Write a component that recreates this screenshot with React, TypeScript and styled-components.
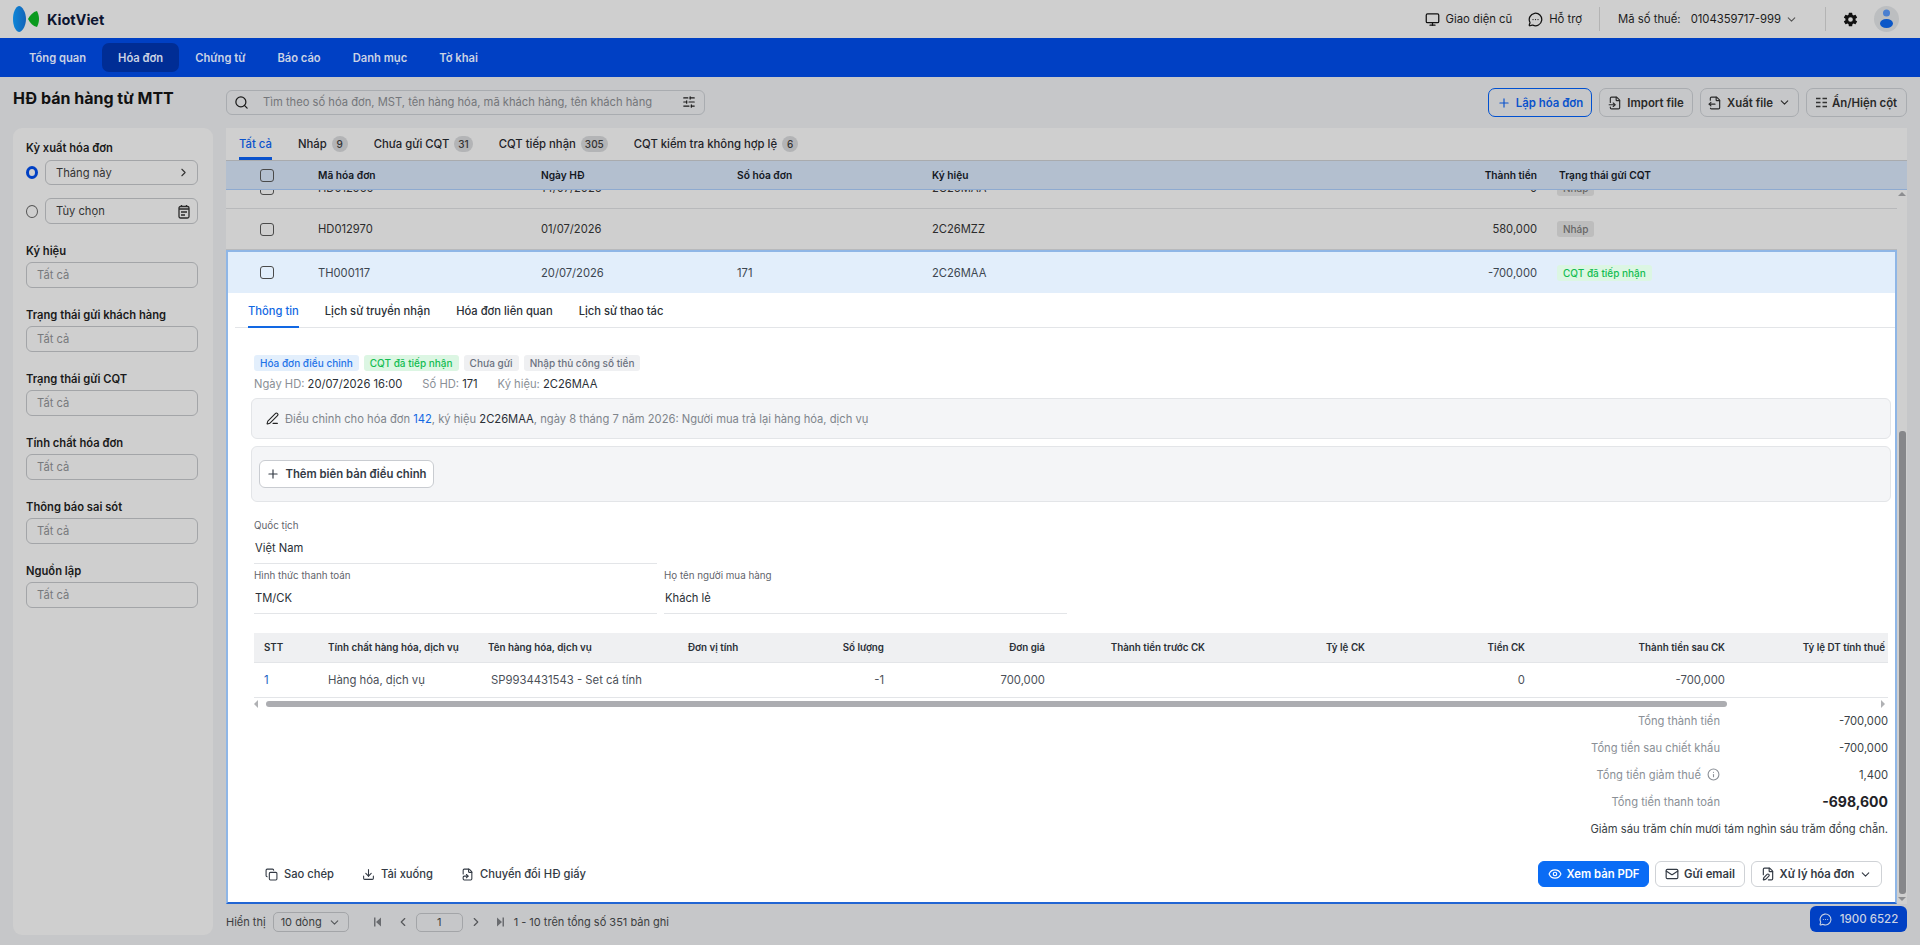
import React from "react";
import styled, { createGlobalStyle } from "styled-components";
import {
  ChevronDown,
  ChevronLeft,
  ChevronRight,
  Copy,
  Download,
  Eye,
  FileInput,
  FileOutput,
  FilePen,
  FileSymlink,
  Info,
  Mail,
  MessageCircleMore,
  Monitor,
  PenLine,
  Plus,
  Search,
  SlidersHorizontal,
} from "lucide-react";
import { IoSettingsSharp } from "react-icons/io5";

const GlobalStyle = createGlobalStyle`
  html, body {
    margin: 0;
    padding: 0;
    height: 945px;
    overflow: hidden;
    background: #c6c7c9;
    font-family: Inter, "Noto Sans", sans-serif;
    color: #111;
  }
  * { box-sizing: border-box; }
`;

const Page = styled.div`
  position: relative;
  width: 1920px;
  height: 945px;
  overflow: hidden;
`;

const TopBar = styled.header`
  height: 38px;
  background: #cfcfcf;
  display: flex;
  align-items: center;
  padding: 0 21px 0 13px;
`;

const Brand = styled.div`
  display: flex;
  align-items: center;
  gap: 8px;
  font-size: 14.5px;
  font-weight: 700;
  color: #0d1430;
`;

const TopRight = styled.div`
  margin-left: auto;
  display: flex;
  align-items: center;
  font-size: 11.3px;
  color: #1c1c1c;
`;

const TopLink = styled.div<{ $ml?: number; $gap?: number }>`
  display: flex;
  align-items: center;
  gap: ${(p) => p.$gap ?? 6}px;
  margin-left: ${(p) => p.$ml ?? 0}px;
`;

const TaxCode = styled.span`
  margin-left: 6px;
`;

const TopSep = styled.span<{ $ml: number }>`
  width: 1px;
  height: 24px;
  background: #b4b4b4;
  margin-left: ${(p) => p.$ml}px;
`;

const Avatar = styled.div`
  width: 25px;
  height: 26px;
  margin-left: 16px;
  border-radius: 50%;
  background: #bcbec0;
  display: flex;
  align-items: center;
  justify-content: center;
`;

const Nav = styled.nav`
  height: 39px;
  background: #0040c4;
  display: flex;
  align-items: center;
  padding-left: 13px;
`;

const NavItem = styled.a<{ $active?: boolean }>`
  height: 29px;
  padding: 0 16px;
  display: flex;
  align-items: center;
  border-radius: 7px;
  font-size: 11.2px;
  font-weight: 600;
  color: #cbd3e4;
  background: ${(p) => (p.$active ? "#002d95" : "transparent")};
`;

const Toolbar = styled.div`
  height: 51px;
  display: flex;
  align-items: center;
  padding: 0 13px;
`;

const Title = styled.h1`
  width: 213px;
  margin: -10px 0 0;
  font-size: 16px;
  font-weight: 700;
  color: #111;
`;

const SearchBox = styled.div`
  width: 479px;
  height: 25px;
  margin-top: -1px;
  padding: 0 8px 0 7px;
  display: flex;
  align-items: center;
  border: 1px solid #a9acb0;
  border-radius: 6px;
  font-size: 11.2px;
  color: #74767a;
  span {
    margin-left: 14px;
    flex: 1;
  }
  svg {
    color: #1a1a1a;
  }
`;

const ToolActions = styled.div`
  margin-left: auto;
  display: flex;
  align-items: center;
  gap: 7px;
`;

const ToolButton = styled.button<{ $w: number; $primary?: boolean }>`
  width: ${(p) => p.$w}px;
  height: 29px;
  padding: 0;
  display: flex;
  align-items: center;
  justify-content: center;
  gap: 5px;
  background: transparent;
  border: 1px solid ${(p) => (p.$primary ? "#0050d0" : "#a9acb0")};
  border-radius: 7px;
  font: 600 11.4px Inter, sans-serif;
  color: ${(p) => (p.$primary ? "#0a52cc" : "#2a2a2a")};
`;

const Workspace = styled.div`
  display: grid;
  grid-template-columns: 200px 1681px;
  gap: 13px;
  padding-left: 13px;
`;

const Sidebar = styled.aside`
  height: 807px;
  padding: 12px 15px 0 13px;
  background: #cfcfcf;
  border-radius: 9px;
`;

const FilterGroup = styled.div`
  display: flex;
  flex-direction: column;
  gap: 3px;
  margin-bottom: 19px;
`;

const FilterLabel = styled.label`
  font-size: 11.2px;
  line-height: 16px;
  font-weight: 600;
  color: #1a1a1a;
`;

const RadioRow = styled.div<{ $mt?: number; $mb: number }>`
  display: flex;
  align-items: center;
  gap: 7px;
  margin-top: ${(p) => p.$mt ?? 0}px;
  margin-bottom: ${(p) => p.$mb}px;
`;

const Radio = styled.span<{ $on?: boolean }>`
  width: 12px;
  height: 13px;
  border-radius: 50%;
  border: ${(p) => (p.$on ? "3.5px solid #0040c4" : "1px solid #555")};
  background: #cfcfcf;
`;

const FilterField = styled.div<{ $h?: number }>`
  flex-grow: 1;
  flex-shrink: 0;
  height: ${(p) => p.$h ?? 26}px;
  padding: 0 7px 0 10px;
  display: flex;
  align-items: center;
  justify-content: space-between;
  border: 1px solid #a3a5a8;
  border-radius: 6px;
  font-size: 11.2px;
  color: ${(p) => (p.$h ? "#333" : "#77797c")};
  svg {
    color: #333;
  }
`;

const FilterValue = styled.span`
  color: #333;
`;

const Main = styled.main`
  display: flex;
  flex-direction: column;
`;

const TableCard = styled.section`
  height: 776px;
  display: flex;
  flex-direction: column;
  background: #cfcfcf;
`;

const TabBar = styled.div`
  height: 33px;
  padding-left: 13px;
  display: flex;
  align-items: flex-start;
  gap: 26px;
  border-bottom: 1px solid #a9abae;
`;

const Tab = styled.div<{ $active?: boolean }>`
  height: 32px;
  display: flex;
  align-items: center;
  gap: 5px;
  font-size: 11.3px;
  font-weight: 500;
  color: ${(p) => (p.$active ? "#0a52cc" : "#1f2328")};
  border-bottom: 3px solid ${(p) => (p.$active ? "#0a52cc" : "transparent")};
  padding-top: 3px;
`;

const Count = styled.span`
  min-width: 16px;
  height: 16px;
  padding: 0 4px;
  border-radius: 8px;
  background: #b3b4b6;
  font-size: 10px;
  line-height: 16px;
  text-align: center;
  color: #333;
`;

const Row = styled.div<{ $inset?: boolean }>`
  display: grid;
  grid-template-columns: ${(p) => (p.$inset ? 90 : 92)}px 223px 196px 195px 305px 300px 1fr;
  align-items: center;
`;

const HeaderRow = styled(Row)`
  height: 29px;
  background: #b3bfcf;
  border-bottom: 1px solid #8eaad0;
  font-size: 10.2px;
  font-weight: 600;
  color: #14181f;
`;

const HeaderStatus = styled.span`
  padding-left: 22px;
`;

const Amount = styled.span`
  text-align: right;
`;

const CheckCell = styled.div<{ $pl: number }>`
  padding-left: ${(p) => p.$pl}px;
  display: flex;
`;

const Check = styled.span`
  width: 14px;
  height: 13px;
  border: 1px solid #4a4a4a;
  border-radius: 3px;
`;

const Scroller = styled.div`
  flex: 1;
  display: flex;
  min-height: 0;
`;

const Rows = styled.div`
  width: 1671px;
  display: flex;
  flex-direction: column;
`;

const ClippedRow = styled.div`
  height: 19px;
  overflow: hidden;
  display: flex;
  flex-direction: column;
  justify-content: flex-end;
`;

const BodyRow = styled(Row)`
  height: 41px;
  flex-shrink: 0;
  border-bottom: 1px solid #b8b9bb;
  font-size: 11.2px;
  color: #2c2c2c;
`;

const Tag = styled.span<{ $tone: "draft" | "ok" | "blue" | "plain" }>`
  justify-self: start;
  height: 16px;
  padding: 0 6px;
  border-radius: 3px;
  font-size: 10px;
  line-height: 16px;
  font-weight: 500;
  white-space: nowrap;
  background: ${(p) =>
    ({ draft: "#bdbdbd", ok: "#dcf6e3", blue: "#e3effc", plain: "#eff0f2" })[p.$tone]};
  color: ${(p) =>
    ({ draft: "#666", ok: "#13bd52", blue: "#1f74e8", plain: "#6b7280" })[p.$tone]};
`;

const StatusTag = styled(Tag)`
  margin-left: 20px;
`;

const Panel = styled.div`
  flex: 1;
  min-height: 0;
  display: flex;
  flex-direction: column;
  background: #fff;
  border: 2px solid #8fb6e6;
  border-bottom-color: #2165d3;
`;

const SelectedRow = styled(Row)`
  height: 41px;
  flex-shrink: 0;
  background: #e2eefb;
  font-size: 11.2px;
  color: #3c4650;
`;

const SubTabs = styled.div`
  height: 35px;
  margin-left: 7px;
  padding-left: 13px;
  display: flex;
  gap: 26px;
  border-bottom: 1px solid #e3e5e8;
`;

const SubTab = styled.div<{ $active?: boolean }>`
  height: 35px;
  display: flex;
  align-items: center;
  padding-top: 2px;
  font-size: 11.2px;
  font-weight: 500;
  color: ${(p) => (p.$active ? "#1268e3" : "#2a2f36")};
  border-bottom: 2px solid ${(p) => (p.$active ? "#1268e3" : "transparent")};
`;

const PanelBody = styled.div`
  flex: 1;
  min-height: 0;
  padding: 27px 4px 15px 23px;
  display: flex;
  flex-direction: column;
`;

const Tags = styled.div`
  display: flex;
  gap: 5px;
  padding-left: 3px;
`;

const Meta = styled.div`
  margin-top: 5px;
  padding-left: 3px;
  display: flex;
  gap: 20px;
  font-size: 11.2px;
  line-height: 16px;
  color: #8a8f96;
  b {
    font-weight: 400;
    color: #2a2f36;
  }
`;

const NoteBox = styled.div<{ $h: number; $mt: number }>`
  height: ${(p) => p.$h}px;
  margin-top: ${(p) => p.$mt}px;
  display: flex;
  align-items: center;
  padding: 0 7px;
  background: #f4f5f7;
  border: 1px solid #e3e5e8;
  border-radius: 6px;
`;

const NoteText = styled.div`
  margin-left: 7px;
  display: flex;
  align-items: center;
  gap: 6px;
  font-size: 11.2px;
  color: #80858c;
  svg {
    color: #222;
  }
  a {
    color: #1268e3;
  }
  b {
    font-weight: 400;
    color: #2a2f36;
  }
`;

const AddButton = styled.button`
  width: 175px;
  height: 28px;
  padding: 0;
  display: flex;
  align-items: center;
  justify-content: center;
  gap: 5px;
  background: #fff;
  border: 1px solid #c9ccd1;
  border-radius: 6px;
  font: 600 11.3px Inter, sans-serif;
  color: #333a44;
`;

const FieldGrid = styled.div`
  margin-top: 17px;
  padding-left: 3px;
  display: grid;
  grid-template-columns: 403px 403px;
  column-gap: 7px;
  row-gap: 5px;
`;

const Field = styled.div<{ $start?: boolean }>`
  grid-column: ${(p) => (p.$start ? "1" : "auto")};
  span {
    display: block;
    font-size: 9.8px;
    line-height: 14px;
    color: #5f646b;
  }
  div {
    height: 31px;
    padding-left: 1px;
    display: flex;
    align-items: center;
    font-size: 11.2px;
    color: #2a2f36;
    border-bottom: 1px solid #e3e5e8;
  }
`;

const LineTable = styled.div`
  margin: 19px 3px 0;
  width: 1634px;
  overflow: hidden;
`;

const LineRow = styled.div`
  display: grid;
  grid-template-columns: 64px 160px 200px 120px 96px 161px 160px 160px 160px 200px 153px;
  align-items: center;
  white-space: nowrap;
  border-bottom: 1px solid #e3e5e8;
`;

const LineHead = styled(LineRow)`
  height: 30px;
  background: #eff0f2;
  font-size: 9.8px;
  font-weight: 600;
  color: #2a2f36;
`;

const LineBody = styled(LineRow)`
  height: 35px;
  font-size: 11.3px;
  color: #4b5058;
`;

const Cell = styled.span<{ $right?: boolean; $pad?: number; $blue?: boolean }>`
  text-align: ${(p) => (p.$right ? "right" : "left")};
  padding: ${(p) => (p.$right ? `0 ${p.$pad ?? 10}px 0 0` : `0 0 0 ${p.$pad ?? 10}px`)};
  color: ${(p) => (p.$blue ? "#1a5fc4" : "inherit")};
`;

const HScroll = styled.div`
  margin: 2px 3px 0;
  width: 1634px;
  height: 7px;
  display: flex;
  align-items: center;
`;

const HThumb = styled.div`
  width: 1461px;
  height: 6px;
  margin-left: 8px;
  border-radius: 3px;
  background: #acadb1;
`;

const Arrow = styled.span<{ $dir: "left" | "right" | "up" | "down" }>`
  width: 0;
  height: 0;
  border: 4px solid transparent;
  ${(p) =>
    ({
      left: "border-left-width: 0; border-right-color: #b0b1b4;",
      right: "border-right-width: 0; border-left-color: #b0b1b4; margin-left: auto; margin-right: 3px;",
      up: "border-top-width: 0; border-bottom-color: #8c8d90;",
      down: "border-bottom-width: 0; border-top-color: #8c8d90;",
    })[p.$dir]}
`;

const Totals = styled.div`
  padding-right: 3px;
  display: grid;
  grid-template-columns: 1fr 168px;
  grid-auto-rows: 27px;
  align-items: center;
  font-size: 11.2px;
  text-align: right;
  color: #3a3f46;
`;

const TotalLabel = styled.div`
  display: flex;
  justify-content: flex-end;
  align-items: center;
  gap: 6px;
  color: #8a8f96;
`;

const GrandTotal = styled.strong`
  font-size: 14px;
  font-weight: 700;
  color: #1f2328;
`;

const AmountWords = styled.div`
  grid-column: 1 / -1;
`;

const PanelFooter = styled.div`
  margin-top: auto;
  padding: 0 9px 0 14px;
  display: flex;
  align-items: center;
  justify-content: space-between;
`;

const FooterGroup = styled.div<{ $gap: number }>`
  display: flex;
  align-items: center;
  gap: ${(p) => p.$gap}px;
`;

const LinkAction = styled.a`
  display: flex;
  align-items: center;
  gap: 6px;
  font-size: 11.2px;
  font-weight: 500;
  color: #333a44;
`;

const PanelButton = styled.button<{ $w: number; $primary?: boolean }>`
  width: ${(p) => p.$w}px;
  height: 26px;
  padding: 0;
  display: flex;
  align-items: center;
  justify-content: center;
  gap: 5px;
  background: ${(p) => (p.$primary ? "#0a6cf5" : "#fff")};
  border: 1px solid ${(p) => (p.$primary ? "#0a6cf5" : "#cfd2d6")};
  border-radius: 6px;
  font: 600 11.3px Inter, sans-serif;
  color: ${(p) => (p.$primary ? "#fff" : "#333a44")};
`;

const VScroll = styled.div`
  width: 10px;
  padding: 2px 0 3px;
  display: flex;
  flex-direction: column;
  align-items: center;
`;

const VThumb = styled.div`
  width: 7px;
  height: 463px;
  margin-top: auto;
  margin-bottom: 3px;
  border-radius: 3px;
  background: #86878a;
`;

const Pager = styled.footer`
  height: 36px;
  display: flex;
  align-items: center;
  font-size: 11px;
  color: #3b3d40;
  svg {
    color: #55575a;
  }
`;

const PageSelect = styled.div`
  width: 76px;
  height: 20px;
  margin: 0 14px 0 7px;
  padding: 0 7px;
  display: flex;
  align-items: center;
  justify-content: space-between;
  border: 1px solid #a3a5a8;
  border-radius: 5px;
`;

const PageInput = styled.div`
  width: 47px;
  height: 19px;
  margin: 0 3px;
  display: flex;
  align-items: center;
  justify-content: center;
  border: 1px solid #a3a5a8;
  border-radius: 5px;
`;

const PageIcon = styled.span<{ $mx: number }>`
  display: flex;
  margin: 0 ${(p) => p.$mx}px;
`;

const Hotline = styled.a`
  position: absolute;
  top: 906px;
  right: 13px;
  width: 97px;
  height: 26px;
  display: flex;
  align-items: center;
  justify-content: center;
  gap: 8px;
  border-radius: 6px;
  background: #0040c4;
  color: #cbd3e4;
  font-size: 11.5px;
  font-weight: 500;
`;

const Logo = () => (
  <svg width="26" height="26" viewBox="0 0 26 26" aria-hidden="true">
    <defs>
      <linearGradient id="lens" x1="0" x2="1" y1="0" y2="0">
        <stop offset="0" stopColor="#0d86d8" />
        <stop offset="1" stopColor="#1463b8" />
      </linearGradient>
    </defs>
    <path d="M6 0C2 1 0 7 0 13s2 12 6 13c3 0 7-6 7-13S9 0 6 0z" fill="url(#lens)" />
    <path d="M15 13C17 9 20 6 24 5c1.500 3 2 5.500 2 8s-.5 5-2 8c-4-1-7-4-9-8z" fill="#0a9a1e" />
  </svg>
);

const AvatarIcon = () => (
  <svg width="15" height="20" viewBox="0 0 15 20" aria-hidden="true">
    <circle cx="7.500" cy="4" r="3.500" fill="#4a7fd0" />
    <ellipse cx="7.500" cy="14.500" rx="6.500" ry="4.500" fill="#0b57c8" />
  </svg>
);

const CalendarIcon = () => (
  <svg width="12" height="15" viewBox="0 0 12 15" fill="none" stroke="#2b2b2b" aria-hidden="true">
    <rect x="1" y="2.500" width="10" height="11.500" rx="1.500" strokeWidth="1.300" />
    <path d="M1 5h10M3 8h6M3 11h4" strokeWidth="1.300" />
    <path d="M3.500 1v2M8.500 1v2" strokeWidth="1.300" />
  </svg>
);

const ColumnsIcon = () => (
  <svg width="11" height="11" viewBox="0 0 11 11" stroke="#333" strokeWidth="1.300" aria-hidden="true">
    <path d="M0 1.500h4.500M6.500 1.500H11M0 5.500h4.500M6.500 5.500H11M0 9.500h4.500M6.500 9.500H11" />
  </svg>
);

const PageEndIcon = ({ last }: { last?: boolean }) => (
  <svg width="14" height="14" viewBox="0 0 14 14" fill="#6a6c70" aria-hidden="true">
    {last ? (
      <path d="M4 2.500l5 4.500-5 4.500zM9.500 2.500H11v9H9.500z" />
    ) : (
      <path d="M10 2.500L5 7l5 4.500zM3 2.500h1.500v9H3z" />
    )}
  </svg>
);

const filters = [
  "Ký hiệu",
  "Trạng thái gửi khách hàng",
  "Trạng thái gửi CQT",
  "Tính chất hóa đơn",
  "Thông báo sai sót",
  "Nguồn lập",
];

const tabs = [
  { label: "Nháp", count: "9" },
  { label: "Chưa gửi CQT", count: "31" },
  { label: "CQT tiếp nhận", count: "305" },
  { label: "CQT kiểm tra không hợp lệ", count: "6" },
];

const lineHeads: [string, boolean][] = [
  ["STT", false],
  ["Tính chất hàng hóa, dịch vụ", false],
  ["Tên hàng hóa, dịch vụ", false],
  ["Đơn vị tính", false],
  ["Số lượng", true],
  ["Đơn giá", true],
  ["Thành tiền trước CK", true],
  ["Tỷ lệ CK", true],
  ["Tiền CK", true],
  ["Thành tiền sau CK", true],
];

export default function App() {
  return (
    <Page>
      <GlobalStyle />
      <TopBar>
        <Brand>
          <Logo />
          KiotViet
        </Brand>
        <TopRight>
          <TopLink>
            <Monitor size={15} color="#111" />
            Giao diện cũ
          </TopLink>
          <TopLink $ml={16}>
            <MessageCircleMore size={15} color="#111" />
            Hỗ trợ
          </TopLink>
          <TopSep $ml={17} />
          <TopLink $ml={18} $gap={4}>
            Mã số thuế:
            <TaxCode>0104359717-999</TaxCode>
            <ChevronDown size={13} color="#555" />
          </TopLink>
          <TopSep $ml={27} />
          <TopLink $ml={17}>
            <IoSettingsSharp size={15} color="#111" />
          </TopLink>
          <Avatar>
            <AvatarIcon />
          </Avatar>
        </TopRight>
      </TopBar>

      <Nav>
        <NavItem>Tổng quan</NavItem>
        <NavItem $active>Hóa đơn</NavItem>
        <NavItem>Chứng từ</NavItem>
        <NavItem>Báo cáo</NavItem>
        <NavItem>Danh mục</NavItem>
        <NavItem>Tờ khai</NavItem>
      </Nav>

      <Toolbar>
        <Title>HĐ bán hàng từ MTT</Title>
        <SearchBox>
          <Search size={15} />
          <span>Tìm theo số hóa đơn, MST, tên hàng hóa, mã khách hàng, tên khách hàng</span>
          <SlidersHorizontal size={14} />
        </SearchBox>
        <ToolActions>
          <ToolButton $w={104} $primary>
            <Plus size={14} />
            Lập hóa đơn
          </ToolButton>
          <ToolButton $w={94}>
            <FileInput size={14} />
            Import file
          </ToolButton>
          <ToolButton $w={99}>
            <FileOutput size={14} />
            Xuất file
            <ChevronDown size={13} />
          </ToolButton>
          <ToolButton $w={101}>
            <ColumnsIcon />
            Ẩn/Hiện cột
          </ToolButton>
        </ToolActions>
      </Toolbar>

      <Workspace>
        <Sidebar>
          <FilterGroup>
            <FilterLabel>Kỳ xuất hóa đơn</FilterLabel>
            <RadioRow $mt={1} $mb={10}>
              <Radio $on />
              <FilterField $h={25}>
                Tháng này
                <ChevronRight size={13} />
              </FilterField>
            </RadioRow>
            <RadioRow $mb={0}>
              <Radio />
              <FilterField>
                <FilterValue>Tùy chọn</FilterValue>
                <CalendarIcon />
              </FilterField>
            </RadioRow>
          </FilterGroup>
          {filters.map((label) => (
            <FilterGroup key={label}>
              <FilterLabel>{label}</FilterLabel>
              <FilterField>Tất cả</FilterField>
            </FilterGroup>
          ))}
        </Sidebar>

        <Main>
          <TableCard>
            <TabBar>
              <Tab $active>Tất cả</Tab>
              {tabs.map((t) => (
                <Tab key={t.label}>
                  {t.label}
                  <Count>{t.count}</Count>
                </Tab>
              ))}
            </TabBar>
            <HeaderRow>
              <CheckCell $pl={34}>
                <Check />
              </CheckCell>
              <span>Mã hóa đơn</span>
              <span>Ngày HĐ</span>
              <span>Số hóa đơn</span>
              <span>Ký hiệu</span>
              <Amount>Thành tiền</Amount>
              <HeaderStatus>Trạng thái gửi CQT</HeaderStatus>
            </HeaderRow>
            <Scroller>
              <Rows>
                <ClippedRow>
                  <BodyRow>
                    <CheckCell $pl={34}>
                      <Check />
                    </CheckCell>
                    <span>HD012969</span>
                    <span>14/07/2026</span>
                    <span />
                    <span>2C26MAA</span>
                    <Amount>0</Amount>
                    <StatusTag $tone="draft">Nháp</StatusTag>
                  </BodyRow>
                </ClippedRow>
                <BodyRow>
                  <CheckCell $pl={34}>
                    <Check />
                  </CheckCell>
                  <span>HD012970</span>
                  <span>01/07/2026</span>
                  <span />
                  <span>2C26MZZ</span>
                  <Amount>580,000</Amount>
                  <StatusTag $tone="draft">Nháp</StatusTag>
                </BodyRow>
                <Panel>
                  <SelectedRow $inset>
                    <CheckCell $pl={32}>
                      <Check />
                    </CheckCell>
                    <span>TH000117</span>
                    <span>20/07/2026</span>
                    <span>171</span>
                    <span>2C26MAA</span>
                    <Amount>-700,000</Amount>
                    <StatusTag $tone="ok">CQT đã tiếp nhận</StatusTag>
                  </SelectedRow>
                  <SubTabs>
                    <SubTab $active>Thông tin</SubTab>
                    <SubTab>Lịch sử truyền nhận</SubTab>
                    <SubTab>Hóa đơn liên quan</SubTab>
                    <SubTab>Lịch sử thao tác</SubTab>
                  </SubTabs>
                  <PanelBody>
                    <Tags>
                      <Tag $tone="blue">Hóa đơn điều chỉnh</Tag>
                      <Tag $tone="ok">CQT đã tiếp nhận</Tag>
                      <Tag $tone="plain">Chưa gửi</Tag>
                      <Tag $tone="plain">Nhập thủ công số tiền</Tag>
                    </Tags>
                    <Meta>
                      <span>
                        Ngày HD: <b>20/07/2026 16:00</b>
                      </span>
                      <span>
                        Số HD: <b>171</b>
                      </span>
                      <span>
                        Ký hiệu: <b>2C26MAA</b>
                      </span>
                    </Meta>
                    <NoteBox $h={41} $mt={6}>
                      <NoteText>
                        <PenLine size={13} />
                        <span>
                          Điều chỉnh cho hóa đơn <a>142</a>, ký hiệu <b>2C26MAA</b>, ngày 8 tháng 7
                          năm 2026: Người mua trả lại hàng hóa, dịch vụ
                        </span>
                      </NoteText>
                    </NoteBox>
                    <NoteBox $h={56} $mt={7}>
                      <AddButton>
                        <Plus size={14} />
                        Thêm biên bản điều chỉnh
                      </AddButton>
                    </NoteBox>
                    <FieldGrid>
                      <Field $start>
                        <span>Quốc tịch</span>
                        <div>Việt Nam</div>
                      </Field>
                      <Field $start>
                        <span>Hình thức thanh toán</span>
                        <div>TM/CK</div>
                      </Field>
                      <Field>
                        <span>Họ tên người mua hàng</span>
                        <div>Khách lẻ</div>
                      </Field>
                    </FieldGrid>
                    <LineTable>
                      <LineHead>
                        {lineHeads.map(([label, right]) => (
                          <Cell key={label} $right={right}>
                            {label}
                          </Cell>
                        ))}
                        <Cell $right $pad={3}>
                          Tỷ lệ DT tính thuế
                        </Cell>
                      </LineHead>
                      <LineBody>
                        <Cell $blue>1</Cell>
                        <Cell>Hàng hóa, dịch vụ</Cell>
                        <Cell $pad={13}>SP9934431543 - Set cá tính</Cell>
                        <Cell />
                        <Cell $right>-1</Cell>
                        <Cell $right>700,000</Cell>
                        <Cell />
                        <Cell />
                        <Cell $right>0</Cell>
                        <Cell $right>-700,000</Cell>
                        <Cell />
                      </LineBody>
                    </LineTable>
                    <HScroll>
                      <Arrow $dir="left" />
                      <HThumb />
                      <Arrow $dir="right" />
                    </HScroll>
                    <Totals>
                      <TotalLabel>Tổng thành tiền</TotalLabel>
                      <div>-700,000</div>
                      <TotalLabel>Tổng tiền sau chiết khấu</TotalLabel>
                      <div>-700,000</div>
                      <TotalLabel>
                        Tổng tiền giảm thuế
                        <Info size={13} />
                      </TotalLabel>
                      <div>1,400</div>
                      <TotalLabel>Tổng tiền thanh toán</TotalLabel>
                      <GrandTotal>-698,600</GrandTotal>
                      <AmountWords>Giảm sáu trăm chín mươi tám nghìn sáu trăm đồng chẵn.</AmountWords>
                    </Totals>
                    <PanelFooter>
                      <FooterGroup $gap={28}>
                        <LinkAction>
                          <Copy size={13} />
                          Sao chép
                        </LinkAction>
                        <LinkAction>
                          <Download size={13} />
                          Tải xuống
                        </LinkAction>
                        <LinkAction>
                          <FileSymlink size={13} />
                          Chuyển đổi HĐ giấy
                        </LinkAction>
                      </FooterGroup>
                      <FooterGroup $gap={6}>
                        <PanelButton $w={111} $primary>
                          <Eye size={14} />
                          Xem bản PDF
                        </PanelButton>
                        <PanelButton $w={90}>
                          <Mail size={14} />
                          Gửi email
                        </PanelButton>
                        <PanelButton $w={131}>
                          <FilePen size={14} />
                          Xử lý hóa đơn
                          <ChevronDown size={13} />
                        </PanelButton>
                      </FooterGroup>
                    </PanelFooter>
                  </PanelBody>
                </Panel>
              </Rows>
              <VScroll>
                <Arrow $dir="up" />
                <VThumb />
                <Arrow $dir="down" />
              </VScroll>
            </Scroller>
          </TableCard>
          <Pager>
            <span>Hiển thị</span>
            <PageSelect>
              10 dòng
              <ChevronDown size={13} />
            </PageSelect>
            <PageIcon $mx={8}>
              <PageEndIcon />
            </PageIcon>
            <PageIcon $mx={3}>
              <ChevronLeft size={14} />
            </PageIcon>
            <PageInput>1</PageInput>
            <PageIcon $mx={3}>
              <ChevronRight size={14} />
            </PageIcon>
            <PageIcon $mx={7}>
              <PageEndIcon last />
            </PageIcon>
            <span>1 - 10 trên tổng số 351 bản ghi</span>
          </Pager>
        </Main>
      </Workspace>
      <Hotline>
        <MessageCircleMore size={13} />
        1900 6522
      </Hotline>
    </Page>
  );
}
